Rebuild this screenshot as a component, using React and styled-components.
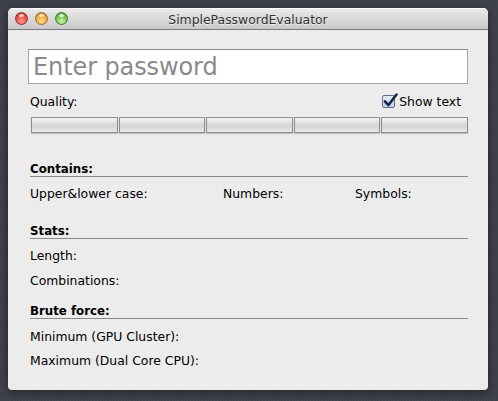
import React from "react";
import styled, { createGlobalStyle } from "styled-components";

const Global = createGlobalStyle`
  html, body { margin: 0; padding: 0; }
  body {
    background: #3e414a;
    background-image: radial-gradient(rgba(255,255,255,0.03) 1px, transparent 1px);
    background-size: 3px 3px;
    font-family: "DejaVu Sans", "Liberation Sans", sans-serif;
    width: 498px; height: 401px; overflow: hidden;
  }
`;

const Page = styled.div`
  padding: 8px 10px 11px 8px;
`;

const Window = styled.div`
  width: 480px;
  height: 382px;
  background: #ececec;
  border-radius: 5px 5px 4px 4px;
  overflow: hidden;
  display: flex;
  flex-direction: column;
  box-shadow: 0 2px 8px rgba(0,0,0,0.5);
`;

const TitleBar = styled.div`
  height: 21px;
  border-bottom: 1px solid #7b7b7b;
  background: linear-gradient(#ececec, #d9d9d9 50%, #c9c9c9);
  box-shadow: inset 0 1px 0 rgba(255,255,255,0.8);
  position: relative;
  display: flex;
  align-items: center;
  justify-content: center;
`;

const Lights = styled.div`
  position: absolute;
  left: 7px;
  top: 4px;
  display: flex;
  gap: 7px;
`;

const Light = styled.span`
  width: 13px;
  height: 13px;
  border-radius: 50%;
  box-sizing: border-box;
  border: 1px solid ${(p) => p.$edge};
  background: radial-gradient(circle at 50% 75%, ${(p) => p.$glow} 0%, ${(p) => p.$base} 60%, ${(p) => p.$dark} 100%);
  position: relative;
  &::after {
    content: "";
    position: absolute;
    left: 3px; top: 1px;
    width: 5px; height: 3px;
    border-radius: 50%;
    background: rgba(255,255,255,0.75);
  }
`;

const Title = styled.div`
  font-size: 12.4px;
  color: #333333;
  margin-top: 1px;
  text-shadow: 0 1px 0 rgba(255,255,255,0.6);
`;

const Content = styled.div`
  padding: 19px 20px 0 20px;
  display: flex;
  flex-direction: column;
`;

const Field = styled.div`
  height: 35px;
  box-sizing: border-box;
  background: #ffffff;
  border: 1px solid #a6a6a6;
  border-top-color: #8c8c8c;
  display: flex;
  align-items: center;
  padding-left: 4px;
  font-size: 24px;
  color: #8a8a8a;
  letter-spacing: -0.1px;
`;

const QualityRow = styled.div`
  height: 23px;
  margin-top: 6px;
  padding-left: 2px;
  display: flex;
  align-items: center;
  justify-content: space-between;
  font-size: 12.4px;
  color: #000;
`;

const CheckLabel = styled.div`
  display: flex;
  align-items: center;
  gap: 4px;
  margin-right: 7px;
`;

const Box = styled.span`
  width: 13px;
  height: 13px;
  box-sizing: border-box;
  border: 1px solid #5f6f8a;
  border-radius: 2px;
  background: linear-gradient(#e6eef8, #bcd0ea);
  position: relative;
  margin-top: 0px;
  svg { position: absolute; left: 0px; top: -3px; }
`;

const Bars = styled.div`
  margin-top: 4px;
  margin-left: 3px;
  display: grid;
  grid-template-columns: repeat(5, 1fr);
  gap: 1px;
`;

const Bar = styled.div`
  height: 16px;
  box-sizing: border-box;
  border: 1px solid #8e8e8e;
  background: linear-gradient(#f3f3f3, #e2e2e2 35%, #d4d4d4 55%, #dedede 80%, #ebebeb);
  box-shadow: 0 1px 1px rgba(0,0,0,0.18);
`;

const Header = styled.div`
  margin-top: ${(p) => p.$top}px;
  margin-left: 2px;
  padding-top: 3px;
  height: 14px;
  line-height: 14px;
  border-bottom: 1px solid #8a8a8a;
  font-size: 11.8px;
  font-weight: bold;
  color: #000;
`;

const Line = styled.div`
  margin-top: ${(p) => p.$top}px;
  margin-left: 2px;
  height: 16px;
  line-height: 16px;
  font-size: 12.4px;
  color: #000;
`;

const Cols = styled(Line)`
  display: grid;
  grid-template-columns: 193px 132px 1fr;
`;

export default function App() {
  return (
    <>
      <Global />
      <Page>
        <Window>
          <TitleBar>
            <Lights>
              <Light $edge="#9b2a27" $base="#e24b44" $glow="#ff9d8a" $dark="#b2302b" />
              <Light $edge="#a0671a" $base="#e9a43a" $glow="#ffe08a" $dark="#c07a20" />
              <Light $edge="#3f7c2c" $base="#6fbf4f" $glow="#c8f7a0" $dark="#4a9634" />
            </Lights>
            <Title>SimplePasswordEvaluator</Title>
          </TitleBar>
          <Content>
            <Field>Enter password</Field>
            <QualityRow>
              <span>Quality:</span>
              <CheckLabel>
                <Box>
                  <svg width="16" height="16" viewBox="0 0 16 16">
                    <path d="M2 8.5 L5.5 12 L13.5 1.5" fill="none" stroke="#1a2744" strokeWidth="2.6" strokeLinecap="round" strokeLinejoin="round" />
                  </svg>
                </Box>
                <span>Show text</span>
              </CheckLabel>
            </QualityRow>
            <Bars>
              <Bar /><Bar /><Bar /><Bar /><Bar />
            </Bars>
            <Header $top={26}>Contains:</Header>
            <Cols $top={9}>
              <span>Upper&amp;lower case:</span>
              <span>Numbers:</span>
              <span>Symbols:</span>
            </Cols>
            <Header $top={19}>Stats:</Header>
            <Line $top={9}>Length:</Line>
            <Line $top={9}>Combinations:</Line>
            <Header $top={12}>Brute force:</Header>
            <Line $top={10}>Minimum (GPU Cluster):</Line>
            <Line $top={8}>Maximum (Dual Core CPU):</Line>
          </Content>
        </Window>
      </Page>
    </>
  );
}
